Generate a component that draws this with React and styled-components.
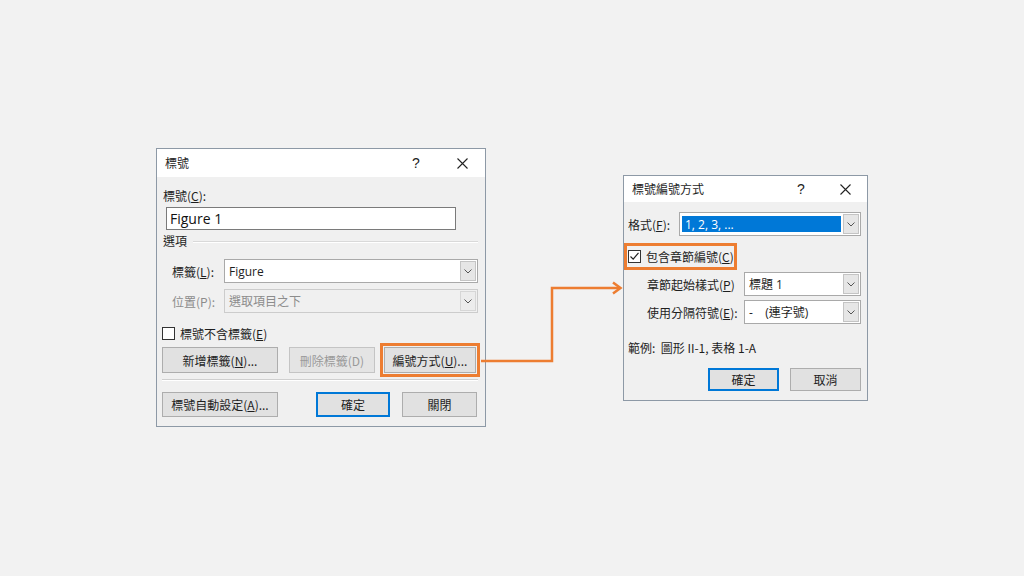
import React from 'react'
import styled, { createGlobalStyle } from 'styled-components'

const ORANGE = '#ed7d31'

const GlobalStyle = createGlobalStyle`
  html, body { margin: 0; padding: 0; background: #f2f2f2; }
  body {
    font-family: "Noto Sans CJK TC", "Noto Sans", sans-serif;
    font-size: 12px;
    color: #1e1e1e;
  }
`

const Stage = styled.div`
  display: flex;
  align-items: flex-start;
  width: 1024px;
  height: 576px;
  box-sizing: border-box;
  padding: 148px 0 0 156px;
  overflow: hidden;
`

const Dialog = styled.div`
  flex: none;
  width: ${p => p.$w}px;
  margin-top: ${p => p.$top || 0}px;
  box-sizing: border-box;
  border: 1px solid #8d99a6;
  background: #f0f0f0;
`

const TitleBar = styled.div`
  display: flex;
  align-items: center;
  height: ${p => p.$h}px;
  background: #fff;
  padding-left: 8px;
`

const TitleText = styled.div`
  flex: 1;
  line-height: 16px;
`

const TitleBtn = styled.div`
  width: ${p => p.$w}px;
  height: 100%;
  display: flex;
  align-items: center;
  justify-content: center;
  font-family: "Liberation Sans", sans-serif;
  font-size: 14px;
  color: #222;
`

const Body = styled.div`
  padding: ${p => p.$pad};
`

const Label = styled.div`
  line-height: 16px;
  margin-top: ${p => p.$mt || 0}px;
  padding-left: ${p => p.$indent || 0}px;
  color: ${p => (p.$muted ? '#8c8c8c' : 'inherit')};
  white-space: pre;
`

const TextInput = styled.div`
  width: 290px;
  height: 23px;
  margin: 3px 0 0 3px;
  box-sizing: border-box;
  border: 1px solid #7a7a7a;
  background: #fff;
  display: flex;
  align-items: center;
  padding-left: 3px;
  font-family: "Open Sans", "Noto Sans", sans-serif;
  font-size: 14px;
  color: #111;
`

const Section = styled.div`
  display: flex;
  align-items: center;
  margin-top: 3px;
  line-height: 16px;
  &::after {
    content: "";
    flex: 1;
    margin: 1px 0 0 6px;
    height: 1px;
    background: #d9d9d9;
    box-shadow: 0 1px 0 #fff;
  }
`

const Row = styled.div`
  display: flex;
  align-items: center;
  height: ${p => p.$h || 24}px;
  margin-top: ${p => p.$mt || 0}px;
  margin-left: ${p => p.$ml || 0}px;
  gap: ${p => p.$gap || 0}px;
  justify-content: ${p => p.$justify || 'flex-start'};
`

const RowLabel = styled.div`
  flex: 1;
  padding-left: ${p => p.$indent || 0}px;
  color: ${p => (p.$muted ? '#8c8c8c' : 'inherit')};
  white-space: pre;
`

const SelectBox = styled.div`
  flex: none;
  display: flex;
  width: ${p => p.$w}px;
  height: 24px;
  box-sizing: border-box;
  border: 1px solid ${p => (p.$disabled ? '#cccccc' : '#a9a9a9')};
  background: ${p => (p.$disabled ? '#f0f0f0' : '#fff')};
  color: ${p => (p.$disabled ? '#8c8c8c' : '#1e1e1e')};
`

const SelectValue = styled.div`
  flex: 1;
  display: flex;
  align-items: center;
  padding-left: 4px;
  font-family: "Open Sans", "Noto Sans CJK TC", sans-serif;
  font-size: 12px;
  white-space: pre;
`

const Selected = styled.div`
  flex: 1;
  display: flex;
  align-items: center;
  margin: 3px 1px 3px 2px;
  padding-left: 3px;
  background: #0078d7;
  color: #fff;
  font-family: "Open Sans", "Noto Sans", sans-serif;
  font-size: 12px;
`

const SelectArrow = styled.div`
  width: 16px;
  margin: 1px;
  box-sizing: border-box;
  border: 1px solid ${p => (p.$disabled ? '#d6d6d6' : '#c4c4c4')};
  background: ${p => (p.$disabled ? '#ececec' : '#e6e6e6')};
  display: flex;
  align-items: center;
  justify-content: center;
`

const Box = styled.div`
  flex: none;
  width: 13px;
  height: 13px;
  box-sizing: border-box;
  border: 1px solid #333;
  background: #fff;
  display: flex;
  align-items: center;
  justify-content: center;
`

const CheckRow = styled.div`
  display: flex;
  align-items: center;
  gap: 5px;
  height: 16px;
  white-space: nowrap;
  margin-top: ${p => p.$mt || 0}px;
  margin-left: ${p => p.$ml || 0}px;
`

const Highlight = styled.div`
  flex: none;
  display: flex;
  align-items: center;
  box-sizing: border-box;
  border: 3px solid ${ORANGE};
  padding: ${p => p.$pad || '1px'};
  margin-left: ${p => p.$ml || 0}px;
  margin-top: ${p => p.$mt || 0}px;
  width: ${p => (p.$w ? `${p.$w}px` : 'auto')};
  height: ${p => (p.$h ? `${p.$h}px` : 'auto')};
`

const Button = styled.button`
  flex: none;
  width: ${p => p.$w}px;
  height: ${p => p.$h || 26}px;
  margin-left: ${p => p.$ml || 0}px;
  padding: 0;
  box-sizing: border-box;
  border: ${p => (p.$primary ? '2px solid #0078d7' : `1px solid ${p.disabled ? '#c4c4c4' : '#adadad'}`)};
  background: ${p => (p.disabled ? '#e4e4e4' : '#e1e1e1')};
  color: ${p => (p.disabled ? '#9a9a9a' : '#1e1e1e')};
  font-family: "Noto Sans CJK TC", "Noto Sans", sans-serif;
  font-size: 12px;
  white-space: nowrap;
`

const Separator = styled.div`
  margin: 2px 0 0 -1px;
  height: 1px;
  background: #cfcfcf;
  box-shadow: 0 1px 0 #fff;
`

const Connector = styled.svg`
  flex: none;
  margin: 132px 0 0 -5px;
  overflow: visible;
`

const Chevron = () => (
  <svg width="8" height="5" viewBox="0 0 8 5">
    <path d="M0.5 0.5 L4 4 L7.5 0.5" fill="none" stroke="#555" strokeWidth="1" />
  </svg>
)

const CloseIcon = () => (
  <svg width="11" height="11" viewBox="0 0 11 11">
    <path d="M0.5 0.5 L10.5 10.5 M10.5 0.5 L0.5 10.5" stroke="#222" strokeWidth="1.1" />
  </svg>
)

const Select = ({ w, value, disabled, highlighted }) => (
  <SelectBox $w={w} $disabled={disabled}>
    {highlighted ? <Selected>{value}</Selected> : <SelectValue>{value}</SelectValue>}
    <SelectArrow $disabled={disabled}><Chevron /></SelectArrow>
  </SelectBox>
)

const Check = ({ checked }) => (
  <Box>
    {checked && (
      <svg width="11" height="11" viewBox="0 0 11 11">
        <path d="M1.5 5.5 L4.2 8.2 L9.5 1.8" fill="none" stroke="#222" strokeWidth="1.2" />
      </svg>
    )}
  </Box>
)

const App = () => {
  return (
    <>
      <GlobalStyle />
      <Stage>
        <Dialog $w={330}>
          <TitleBar $h={28}>
            <TitleText>標號</TitleText>
            <TitleBtn $w={46}>?</TitleBtn>
            <TitleBtn $w={46}><CloseIcon /></TitleBtn>
          </TitleBar>
          <Body $pad="11px 7px 9px 6px">
            <Label>標號(<u>C</u>):</Label>
            <TextInput>Figure 1</TextInput>
            <Section>選項</Section>
            <Row $mt={10}>
              <RowLabel $indent={9}>標籤(<u>L</u>):</RowLabel>
              <Select w={254} value="Figure" />
            </Row>
            <Row $mt={6}>
              <RowLabel $indent={9} $muted>位置(P):</RowLabel>
              <Select w={254} value="選取項目之下" disabled />
            </Row>
            <CheckRow $mt={12} $ml={-1}>
              <Check />
              <span>標號不含標籤(<u>E</u>)</span>
            </CheckRow>
            <Row $h={34} $mt={2} $ml={-1}>
              <Button $w={116}>新增標籤(<u>N</u>)...</Button>
              <Button $w={86} $ml={11} disabled>刪除標籤(D)</Button>
              <Highlight $ml={5}>
                <Button $w={92}>編號方式(<u>U</u>)...</Button>
              </Highlight>
            </Row>
            <Separator />
            <Row $h={25} $mt={12} $ml={-1}>
              <Button $w={116} $h={25}>標號自動設定(<u>A</u>)...</Button>
              <Button $w={74} $h={25} $ml={38} $primary>確定</Button>
              <Button $w={75} $h={25} $ml={12}>關閉</Button>
            </Row>
          </Body>
        </Dialog>

        <Connector width="142" height="90" viewBox="0 0 142 90">
          <path d="M0 81 H71 V8 H139" fill="none" stroke={ORANGE} strokeWidth="2.5" />
          <path d="M132 2.5 L139.5 8 L132 13.5" fill="none" stroke={ORANGE} strokeWidth="2.5" />
        </Connector>

        <Dialog $w={245} $top={27}>
          <TitleBar $h={26}>
            <TitleText>標號編號方式</TitleText>
            <TitleBtn $w={44}>?</TitleBtn>
            <TitleBtn $w={44}><CloseIcon /></TitleBtn>
          </TitleBar>
          <Body $pad="10px 6px 9px 4px">
            <Row>
              <RowLabel>格式(<u>F</u>):</RowLabel>
              <Select w={182} value="1, 2, 3, ..." highlighted />
            </Row>
            <Highlight $ml={-4} $mt={7} $w={113} $h={27} $pad="0 0 0 1px">
              <CheckRow>
                <Check checked />
                <span>包含章節編號(<u>C</u>)</span>
              </CheckRow>
            </Highlight>
            <Row $mt={2}>
              <RowLabel $indent={19}>章節起始樣式(<u>P</u>)</RowLabel>
              <Select w={117} value="標題 1" />
            </Row>
            <Row $mt={4}>
              <RowLabel $indent={19}>使用分隔符號(<u>E</u>):</RowLabel>
              <Select w={117} value="-    (連字號)" />
            </Row>
            <Label $mt={16}>{'範例:  圖形 II-1, 表格 1-A'}</Label>
            <Row $h={23} $mt={12} $justify="flex-end" $gap={11}>
              <Button $w={71} $h={23} $primary>確定</Button>
              <Button $w={71} $h={23}>取消</Button>
            </Row>
          </Body>
        </Dialog>
      </Stage>
    </>
  )
}

export default App
